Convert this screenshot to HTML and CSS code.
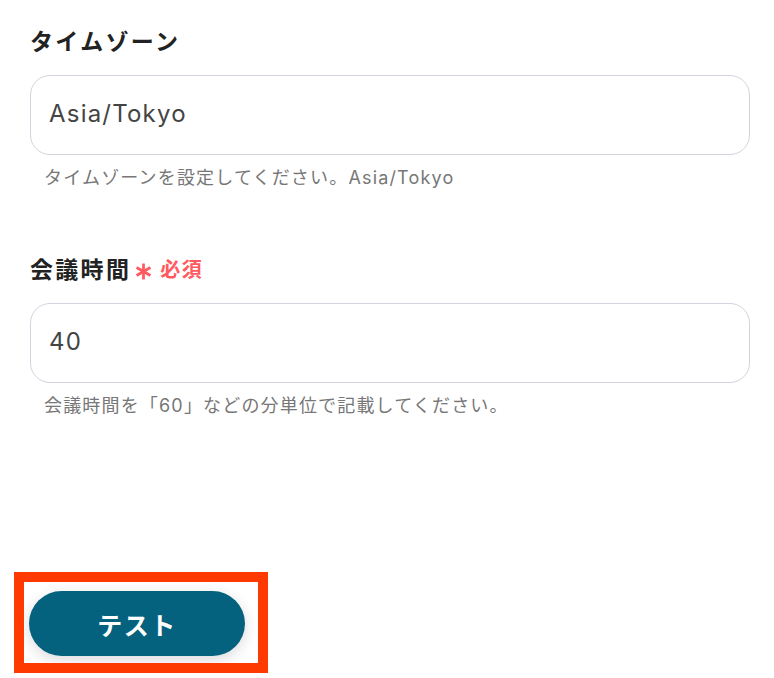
FILE: index.html
```html
<!DOCTYPE html>
<html lang="ja">
<head>
<meta charset="utf-8">
<link rel="stylesheet" href="styles.css">
</head>
<body>
<main class="form">
  <section class="field">
    <div class="label">タイムゾーン</div>
    <div class="input">Asia/Tokyo</div>
    <p class="help">タイムゾーンを設定してください。Asia/Tokyo</p>
  </section>
  <section class="field field-second">
    <div class="label">会議時間<span class="req"><svg class="ast" viewBox="0 0 16 16" width="17" height="17"><g stroke="#ff5a5f" stroke-width="2.6" stroke-linecap="butt"><line x1="8" y1="0.5" x2="8" y2="15.5"/><line x1="1.5" y1="4.25" x2="14.5" y2="11.75"/><line x1="1.5" y1="11.75" x2="14.5" y2="4.25"/></g></svg>必須</span></div>
    <div class="input">40</div>
    <p class="help">会議時間を「60」などの分単位で記載してください。</p>
  </section>
  <div class="actions">
    <div class="btn-wrap">
      <button class="btn">テスト</button>
      <span class="highlight"></span>
    </div>
  </div>
</main>
</body>
</html>
```

FILE: styles.css
```css
html, body {
  margin: 0;
  padding: 0;
  background: #ffffff;
}
body {
  font-family: Inter, "Noto Sans CJK JP", sans-serif;
  color: #222222;
}
.form {
  padding: 26px 0 30px 30px;
  width: 720px;
}
.field {
  display: flex;
  flex-direction: column;
}
.field-second {
  margin-top: 63px;
}
.label {
  font-size: 23px;
  line-height: 32px;
  height: 32px;
  font-weight: 700;
  letter-spacing: 0.1em;
  color: #222222;
  display: flex;
  align-items: center;
}
.req {
  display: inline-flex;
  align-items: center;
  color: #ff5a5f;
  font-size: 20px;
  font-weight: 700;
  letter-spacing: 0.08em;
  margin-left: 4px;
}
.ast {
  margin-right: 8px;
  margin-top: 2px;
}
.input {
  margin-top: 17px;
  box-sizing: border-box;
  height: 80px;
  border: 1px solid #d3d3de;
  border-radius: 20px;
  background: #fff;
  padding: 0 18px 3px;
  display: flex;
  align-items: center;
  font-size: 24px;
  letter-spacing: 0.05em;
  color: #444444;
}
.help {
  margin: 10px 0 0 14px;
  font-size: 18px;
  line-height: 26px;
  letter-spacing: 0.065em;
  color: #777777;
}
.actions {
  margin-top: 172px;
  display: flex;
}
.btn-wrap {
  position: relative;
  margin-left: -1px;
}
.btn {
  width: 216px;
  height: 65px;
  border: none;
  border-radius: 33px;
  background: #04627f;
  color: #ffffff;
  font-family: Inter, "Noto Sans CJK JP", sans-serif;
  font-size: 25px;
  font-weight: 700;
  letter-spacing: 0.06em;
  box-shadow: 0 4px 14px rgba(30, 30, 60, 0.16);
  display: block;
}
.highlight {
  position: absolute;
  top: -19px;
  left: -15px;
  right: -23px;
  bottom: -17px;
  border: 10px solid #ff3a00;
  pointer-events: none;
}
```
